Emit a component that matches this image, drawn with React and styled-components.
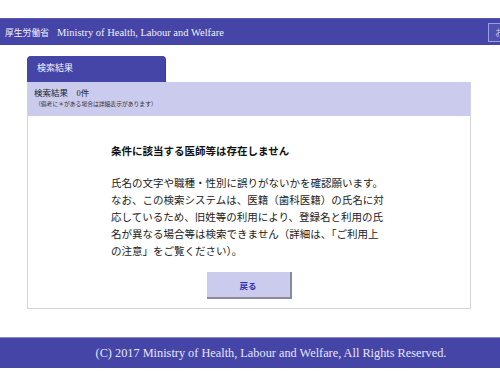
import React from "react";
import styled, { createGlobalStyle } from "styled-components";

const Global = createGlobalStyle`
  html, body { margin: 0; padding: 0; background: #ffffff; }
  body {
    font-family: "Liberation Serif", "Noto Sans CJK JP", serif;
    color: #222;
  }
`;

const Header = styled.header`
  margin-top: 18px;
  height: 27px;
  background: #4545a8;
  border-top: 1px solid #5858b6;
  box-sizing: border-box;
  display: flex;
  align-items: center;
  overflow: hidden;
`;

const SiteTitle = styled.div`
  flex: 1;
  padding-left: 5px;
  color: #f0f0fa;
  white-space: nowrap;
  display: flex;
  align-items: baseline;
  gap: 8px;
`;

const TitleJa = styled.span`
  font-size: 8.8px;
`;

const TitleEn = styled.span`
  font-size: 10.5px;
`;

const HeaderLink = styled.div`
  flex-shrink: 0;
  width: 60px;
  height: 19px;
  margin-right: -48px;
  border: 1px solid #9d9de2;
  background: #5050b0;
  box-sizing: border-box;
  color: #b8b8e8;
  font-size: 9px;
  white-space: nowrap;
  overflow: hidden;
  display: flex;
  align-items: center;
  padding-left: 6px;
`;

const Main = styled.main`
  margin: 11px 29px 0 27px;
`;

const Tab = styled.div`
  width: 138px;
  height: 26px;
  box-sizing: border-box;
  background: #4545a8;
  border-radius: 4px 4px 0 0;
  box-shadow: 1px 0 0 #3a3a90;
  color: #f4f4fc;
  font-size: 9px;
  padding: 5px 0 0 10px;
`;

const Panel = styled.section`
  border: 1px solid #d3d3e0;
  border-top: none;
  background: #fff;
`;

const PanelHead = styled.div`
  background: #cbcbee;
  padding: 5px 6px 5px 6px;
  height: 34px;
  box-sizing: border-box;
`;

const Count = styled.div`
  font-size: 8.5px;
  line-height: 12px;
  color: #222;
`;

const Note = styled.div`
  font-size: 5.8px;
  line-height: 10px;
  color: #333;
  padding-left: 1px;
`;

const Body = styled.div`
  padding: 27px 0 9px;
  display: flex;
  flex-direction: column;
  align-items: center;
`;

const Message = styled.div`
  width: 276px;
`;

const Title = styled.h2`
  margin: 0;
  font-size: 10.5px;
  line-height: 17px;
  font-weight: bold;
  color: #111;
`;

const Text = styled.p`
  margin: 15px 0 0;
  font-size: 10.5px;
  line-height: 17px;
  color: #222;
`;

const BackButton = styled.button`
  margin-top: 12px;
  width: 85px;
  height: 27px;
  background: #cbcbee;
  border: none;
  border-right: 2px solid #8a8a9a;
  border-bottom: 2px solid #8a8a9a;
  box-sizing: border-box;
  font-family: "Noto Sans CJK JP", sans-serif;
  font-size: 8.5px;
  font-weight: bold;
  color: #3030b0;
  cursor: pointer;
`;

const Footer = styled.footer`
  margin-top: 28px;
  height: 31px;
  background: #4545a8;
  border-top: 1px solid #8c8cc4;
  box-sizing: border-box;
  display: flex;
  align-items: center;
  justify-content: center;
  padding-left: 42px;
  color: #e6e6f6;
  font-size: 12.3px;
  white-space: nowrap;
`;

export default function App() {
  return (
    <>
      <Global />
      <Header>
        <SiteTitle>
          <TitleJa>厚生労働省</TitleJa>
          <TitleEn>Ministry of Health, Labour and Welfare</TitleEn>
        </SiteTitle>
        <HeaderLink>お問い合わせ</HeaderLink>
      </Header>
      <Main>
        <Tab>検索結果</Tab>
        <Panel>
          <PanelHead>
            <Count>検索結果　0件</Count>
            <Note>（備考に＊がある場合は詳細表示があります）</Note>
          </PanelHead>
          <Body>
            <Message>
              <Title>条件に該当する医師等は存在しません</Title>
              <Text>
                氏名の文字や職種・性別に誤りがないかを確認願います。なお、この検索システムは、医籍（歯科医籍）の氏名に対応しているため、旧姓等の利用により、登録名と利用の氏名が異なる場合等は検索できません（詳細は、「ご利用上の注意」をご覧ください）。
              </Text>
            </Message>
            <BackButton>戻る</BackButton>
          </Body>
        </Panel>
      </Main>
      <Footer>(C) 2017 Ministry of Health, Labour and Welfare, All Rights Reserved.</Footer>
    </>
  );
}
